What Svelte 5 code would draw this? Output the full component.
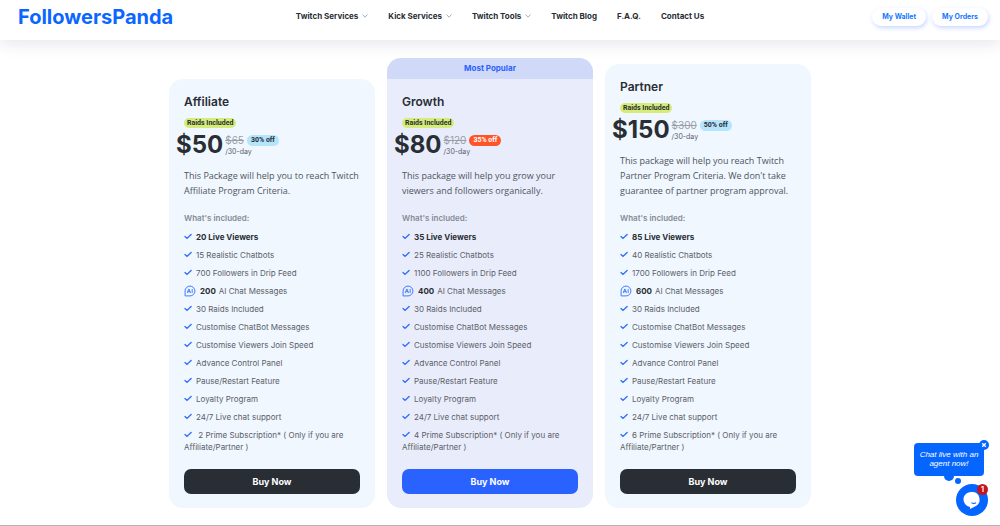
<script>
  const menu = [
    { label: 'Twitch Services', sub: true },
    { label: 'Kick Services', sub: true },
    { label: 'Twitch Tools', sub: true },
    { label: 'Twitch Blog' },
    { label: 'F.A.Q.' },
    { label: 'Contact Us' }
  ];

  const plans = [
    {
      name: 'Affiliate', price: 50, old: 65, off: 30, viewers: 20, chatbots: 15, followers: 700, messages: 200, prime: '\u00a02',
      text: 'This Package will help you to reach Twitch Affiliate Program Criteria.'
    },
    {
      name: 'Growth', price: 80, old: 120, off: 35, viewers: 35, chatbots: 25, followers: 1100, messages: 400, prime: '4',
      text: 'This package will help you grow your viewers and followers organically.',
      popular: true
    },
    {
      name: 'Partner', price: 150, old: 300, off: 50, viewers: 85, chatbots: 40, followers: 1700, messages: 600, prime: '6',
      text: "This package will help you reach Twitch Partner Program Criteria. We don't take guarantee of partner program approval."
    }
  ];

  const common = [
    '30 Raids Included',
    'Customise ChatBot Messages',
    'Customise Viewers Join Speed',
    'Advance Control Panel',
    'Pause/Restart Feature',
    'Loyalty Program',
    '24/7 Live chat support'
  ];

  let chatHint = $state(true);
</script>

{#snippet check()}
  <svg class="check" viewBox="0 0 8 7" aria-hidden="true"><path d="M1 3.6 3 5.4 7.1 1.6" /></svg>
{/snippet}

<header>
  <a class="logo" href="#home">FollowersPanda</a>
  <nav>
    {#each menu as item}
      <a href="#menu">
        {item.label}
        {#if item.sub}
          <svg class="chevron" viewBox="0 0 6 4" aria-hidden="true"><path d="M.5.5 3 3.2 5.5.5" /></svg>
        {/if}
      </a>
    {/each}
  </nav>
  <div class="account">
    <a href="#wallet">My Wallet</a>
    <a href="#orders">My Orders</a>
  </div>
</header>

<main>
  {#each plans as plan}
    <article class:popular={plan.popular}>
      {#if plan.popular}
        <div class="ribbon">Most Popular</div>
      {/if}
      <div class="body">
        <h2>{plan.name}</h2>
        <span class="raids">Raids Included</span>
        <div class="price">
          <strong>${plan.price}</strong>
          <div class="terms">
            <div class="deal"><s>${plan.old}</s><span class="off">{plan.off}% off</span></div>
            <small>/30-day</small>
          </div>
        </div>
        <p>{plan.text}</p>
        <h3>What's included:</h3>
        <ul>
          <li class="main">{@render check()}{plan.viewers} Live Viewers</li>
          <li>{@render check()}{plan.chatbots} Realistic Chatbots</li>
          <li>{@render check()}{plan.followers} Followers in Drip Feed</li>
          <li class="messages">
            <svg class="ai" viewBox="0 0 22 22" aria-hidden="true">
              <path d="M2 20V11a9 9 0 1 1 9 9z" />
              <path d="M6 14.5 8.7 7.5h.6L12 14.5M7 12.3h4M15 7.5v7" />
            </svg><b>{plan.messages}</b> AI Chat Messages
          </li>
          {#each common as feature}
            <li>{@render check()}{feature}</li>
          {/each}
          <li>{@render check()}{plan.prime} Prime Subscription* ( Only if you are Affiliate/Partner )</li>
        </ul>
        <button class="buy">Buy Now</button>
      </div>
    </article>
  {/each}
</main>

<aside class="chat">
  {#if chatHint}
    <div class="hint">
      Chat live with an agent now!
      <button class="close" aria-label="Close" onclick={() => (chatHint = false)}>
        <svg viewBox="0 0 10 10"><path d="M3.2 3.2 6.8 6.8M6.8 3.2 3.2 6.8" /></svg>
      </button>
      <svg class="tail" viewBox="0 0 18 10" aria-hidden="true">
        <path d="M0 0H10A5 5 0 0 1 0 0Z" />
        <circle cx="14" cy="5" r="3" />
      </svg>
    </div>
  {/if}
  <button class="launcher" aria-label="Open chat">
    <svg viewBox="0 0 32 32">
      <circle cx="16" cy="16" r="16" />
      <path class="face" d="M16 8a7.5 7.5 0 0 1 3 14.4L14 25V23A7.5 7.5 0 0 1 16 8Z" />
      <path class="smile" d="M15.5 18.8q2.3 1.4 4.5 0" />
    </svg>
    <span class="count">1</span>
  </button>
</aside>

<style>
  :global(body) {
    font-family: Inter, 'Liberation Sans', sans-serif;
    color: #292d34;
    background: #fff;
    border-bottom: 1px solid #b5b5b5;
  }

  a {
    color: inherit;
    text-decoration: none;
  }

  button {
    border: 0;
    padding: 0;
    font-family: inherit;
    cursor: pointer;
  }

  header {
    display: grid;
    grid-template-columns: 1fr auto 1fr;
    align-items: center;
    height: 40px;
    padding: 0 12px;
    box-sizing: border-box;
    box-shadow: 0 4px 16px #1e28501c;
  }

  .logo {
    margin-left: 6px;
    font-size: 20px;
    line-height: 24px;
    font-weight: 700;
    color: #0b66ff;
    padding-bottom: 7px;
  }

  nav {
    display: flex;
    gap: 20px;
    padding-bottom: 8px;
    font-size: 8px;
    line-height: 12px;
    font-weight: 700;
  }

  nav a {
    display: flex;
    align-items: center;
    gap: 4px;
  }

  .chevron {
    width: 6px;
    height: 4px;
    fill: none;
    stroke: #a9aec0;
  }

  .account {
    display: flex;
    justify-content: flex-end;
    gap: 6px;
    padding-bottom: 6px;
  }

  .account a {
    padding: 0 10px;
    border-radius: 9px;
    font-size: 7px;
    line-height: 18px;
    font-weight: 700;
    color: #1677ff;
    box-shadow: 1px 2px 4px #2962ff40;
  }

  main {
    display: grid;
    grid-template-columns: repeat(3, 1fr);
    align-items: end;
    gap: 12px;
    max-width: 642px;
    margin: 0 auto;
    padding: 18px 20px 17px 0;
  }

  article {
    border-radius: 14px;
    background: #f0f7ff;
    overflow: hidden;
  }

  .popular {
    background: #e9edfb;
  }

  .ribbon {
    font-size: 8px;
    line-height: 21px;
    font-weight: 700;
    text-align: center;
    color: #2962ff;
    background: #d1d9f8;
  }

  .body {
    padding: 15px 15px 14px;
  }

  h2 {
    margin: 0 0 8px;
    font-size: 12px;
    line-height: 16px;
    font-weight: 600;
  }

  .raids {
    display: block;
    width: fit-content;
    padding: 0 3px;
    border-radius: 5px;
    font-family: Roboto, sans-serif;
    font-size: 7px;
    line-height: 10px;
    font-weight: 700;
    background: #d5ec79;
  }

  .price {
    display: flex;
    gap: 2px;
    margin: 3px 0 9px -8px;
  }

  .price strong {
    font-size: 24px;
    line-height: 28px;
    font-weight: 700;
  }

  .terms {
    padding-top: 4px;
  }

  .deal {
    display: flex;
    align-items: center;
    gap: 3px;
  }

  s {
    font-size: 10px;
    line-height: 11px;
    color: #999ea6;
  }

  .off {
    padding: 0 4px;
    border-radius: 6px;
    font-family: Roboto, sans-serif;
    font-size: 7px;
    line-height: 11px;
    font-weight: 700;
    background: #b5e4fd;
  }

  .popular .off {
    color: #fff;
    background: #ff5429;
  }

  small {
    display: block;
    font-size: 7px;
    line-height: 12px;
    color: #5b6068;
  }

  p {
    margin: 0 0 14px;
    font-family: 'Open Sans', sans-serif;
    font-size: 9px;
    line-height: 15px;
    color: #4f545c;
  }

  h3 {
    margin: 0 0 7px;
    font-size: 8px;
    line-height: 12px;
    font-weight: 600;
    color: #858b94;
  }

  ul {
    display: grid;
    gap: 6px;
    margin: 0 0 16px;
    padding: 0;
    list-style: none;
    font-size: 8px;
    line-height: 12px;
    color: #5b6068;
  }

  .main,
  b {
    font-weight: 700;
    color: #292d34;
  }

  .check {
    width: 8px;
    height: 7px;
    margin-right: 4px;
    fill: none;
    stroke: #2e6dff;
    stroke-width: 1.4;
    stroke-linecap: round;
  }

  .messages {
    display: flex;
    align-items: center;
    gap: 3px;
    height: 12px;
  }

  .ai {
    width: 12px;
    height: 12px;
    margin-right: 1px;
    fill: none;
    stroke: #3f78ff;
    stroke-width: 1.8;
  }

  .buy {
    display: block;
    width: 100%;
    border-radius: 7px;
    font-size: 9px;
    line-height: 25px;
    font-weight: 700;
    color: #fff;
    background: #292d34;
  }

  .popular .buy {
    background: #2962ff;
  }

  .chat {
    position: fixed;
    right: 12px;
    bottom: 10px;
    display: flex;
    flex-direction: column;
    align-items: flex-end;
    gap: 8px;
  }

  .hint {
    position: relative;
    width: 70px;
    margin-right: 4px;
    padding: 7px 5px 8px;
    box-sizing: border-box;
    border-radius: 4px;
    font: italic 8px/9px 'Liberation Sans', sans-serif;
    text-align: center;
    color: #fff;
    background: #0566ff;
  }

  .close {
    position: absolute;
    top: -3px;
    right: -5px;
    width: 10px;
    height: 10px;
    border-radius: 50%;
    background: #0566ff;
  }

  .close svg,
  .launcher svg {
    display: block;
  }

  .close path {
    stroke: #fff;
    stroke-width: 1.3;
  }

  .tail {
    position: absolute;
    top: 100%;
    left: 30px;
    width: 18px;
    height: 10px;
    fill: #0566ff;
  }

  .launcher {
    position: relative;
    width: 32px;
    height: 32px;
    background: none;
  }

  .launcher circle {
    fill: #0566ff;
  }

  .face {
    fill: #fff;
  }

  .smile {
    fill: none;
    stroke: #0566ff;
    stroke-width: 1.2;
  }

  .count {
    position: absolute;
    top: 0;
    right: 0;
    width: 11px;
    border-radius: 50%;
    font-size: 7px;
    line-height: 11px;
    font-weight: 700;
    color: #fff;
    background: #c4161c;
  }
</style>
